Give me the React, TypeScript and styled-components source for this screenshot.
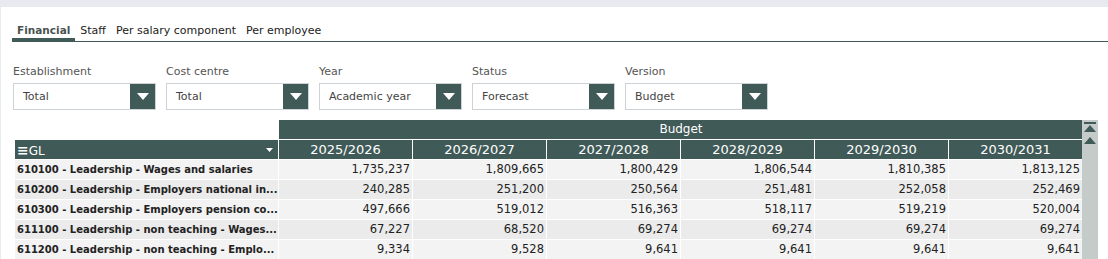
import styled, { createGlobalStyle } from 'styled-components'

const GREEN = '#405a57'

const GlobalStyle = createGlobalStyle`
  body {
    margin: 0;
    background: #e9eaef;
    font-family: 'DejaVu Sans', 'Open Sans', sans-serif;
    color: #222;
  }
`

const tabs = ['Financial', 'Staff', 'Per salary component', 'Per employee']

const filters = [
  { label: 'Establishment', value: 'Total' },
  { label: 'Cost centre', value: 'Total' },
  { label: 'Year', value: 'Academic year' },
  { label: 'Status', value: 'Forecast' },
  { label: 'Version', value: 'Budget' },
]

const years = ['2025/2026', '2026/2027', '2027/2028', '2028/2029', '2029/2030', '2030/2031']

const rows = [
  {
    name: '610100 - Leadership - Wages and salaries',
    values: ['1,735,237', '1,809,665', '1,800,429', '1,806,544', '1,810,385', '1,813,125'],
  },
  {
    name: '610200 - Leadership - Employers national in...',
    values: ['240,285', '251,200', '250,564', '251,481', '252,058', '252,469'],
  },
  {
    name: '610300 - Leadership - Employers pension co...',
    values: ['497,666', '519,012', '516,363', '518,117', '519,219', '520,004'],
  },
  {
    name: '611100 - Leadership - non teaching - Wages...',
    values: ['67,227', '68,520', '69,274', '69,274', '69,274', '69,274'],
  },
  {
    name: '611200 - Leadership - non teaching - Emplo...',
    values: ['9,334', '9,528', '9,641', '9,641', '9,641', '9,641'],
  },
]

const App = () => {
  return (
    <>
      <GlobalStyle />
      <Panel>
        <TabBar>
          {tabs.map((t, i) => (
            <Tab key={t} $active={i === 0}>
              {t}
            </Tab>
          ))}
        </TabBar>

        <Filters>
          {filters.map((f) => (
            <Filter key={f.label}>
              <FilterLabel>{f.label}</FilterLabel>
              <Select>
                <SelectValue>{f.value}</SelectValue>
                <SelectButton>
                  <svg width="12" height="7" viewBox="0 0 12 7">
                    <path d="M0 0 H12 L6 7 Z" fill="#fff" />
                  </svg>
                </SelectButton>
              </Select>
            </Filter>
          ))}
        </Filters>

        <TableWrap>
          <Grid>
            <Blank />
            <GroupHead>Budget</GroupHead>
            <GlHead>
              <span>
                <MenuIcon>≡</MenuIcon>GL
              </span>
              <svg width="7" height="4" viewBox="0 0 7 4">
                <path d="M0 0 H7 L3.5 4 Z" fill="#fff" />
              </svg>
            </GlHead>
            {years.map((y) => (
              <YearHead key={y}>{y}</YearHead>
            ))}
            {rows.map((r, i) => (
              <Row key={r.name} $odd={i % 2 === 1}>
                <NameCell>{r.name}</NameCell>
                {r.values.map((v, j) => (
                  <NumCell key={j}>{v}</NumCell>
                ))}
              </Row>
            ))}
          </Grid>
          <Scrollbar>
            <svg width="12" height="10" viewBox="0 0 12 10">
              <rect x="0" y="0" width="12" height="2" fill={GREEN} />
              <path d="M0 10 L6 3 L12 10 Z" fill={GREEN} />
            </svg>
            <svg width="12" height="8" viewBox="0 0 12 8">
              <path d="M0 7 L6 0 L12 7 Z" fill={GREEN} />
            </svg>
          </Scrollbar>
        </TableWrap>
      </Panel>
    </>
  )
}

export default App

const Panel = styled.div`
  margin: 7px 0 0 1px;
  height: 252px;
  background: #fff;
  overflow: hidden;
`

const TabBar = styled.div`
  display: flex;
  margin: 0 0 0 11px;
  padding-top: 16px;
  border-bottom: 1px solid ${GREEN};
  height: 18px;
`

const Tab = styled.div<{ $active?: boolean }>`
  padding: 0 5px;
  line-height: 15px;
  height: 15px;
  font-weight: ${(p) => (p.$active ? 'bold' : 'normal')};
  font-size: ${(p) => (p.$active ? '10.5px' : '11px')};
  color: ${(p) => (p.$active ? '#4a5452' : '#222')};
  border-bottom: 3px solid ${(p) => (p.$active ? GREEN : 'transparent')};
`

const Filters = styled.div`
  display: flex;
  gap: 10px;
  padding: 23px 0 0 12px;
`

const Filter = styled.div`
  display: flex;
  flex-direction: column;
  width: 143px;
`

const FilterLabel = styled.div`
  font-size: 11px;
  line-height: 14px;
  color: #555;
  margin-bottom: 4px;
`

const Select = styled.div`
  display: flex;
  height: 27px;
  box-sizing: border-box;
  border: 1px solid #ccd2d6;
`

const SelectValue = styled.div`
  flex: 1;
  padding-left: 9px;
  font-size: 11px;
  line-height: 25px;
  color: #444;
`

const SelectButton = styled.div`
  width: 25px;
  background: ${GREEN};
  display: flex;
  align-items: center;
  justify-content: center;
`

const TableWrap = styled.div`
  display: flex;
  margin: 10px 0 0 14px;
`

const Grid = styled.div`
  display: grid;
  grid-template-columns: 264px repeat(6, 134px);
  font-size: 11px;
`

const Blank = styled.div`
  height: 20px;
`

const GroupHead = styled.div`
  grid-column: 2 / span 6;
  height: 19px;
  border-bottom: 1px solid #fff;
  background: ${GREEN};
  color: #fff;
  text-align: center;
  line-height: 19px;
  font-size: 12px;
`

const GlHead = styled.div`
  height: 19px;
  border-bottom: 1px solid #fff;
  border-right: 1px solid #fff;
  background: ${GREEN};
  color: #fff;
  display: flex;
  align-items: center;
  justify-content: space-between;
  padding: 0 5px 0 2px;
  font-size: 12px;
`

const MenuIcon = styled.span`
  font-size: 14px;
  font-weight: bold;
`

const YearHead = styled.div`
  height: 19px;
  border-bottom: 1px solid #fff;
  border-right: 1px solid #fff;
  background: ${GREEN};
  color: #fff;
  text-align: center;
  line-height: 19px;
  font-size: 13px;
`

const Row = styled.div<{ $odd?: boolean }>`
  display: contents;
  & > div {
    background: ${(p) => (p.$odd ? '#ebebeb' : '#f3f3f3')};
  }
`

const NameCell = styled.div`
  height: 19px;
  line-height: 19px;
  border-bottom: 1px solid #fff;
  border-right: 1px solid #fff;
  font-weight: bold;
  font-size: 10px;
  padding-left: 2px;
  white-space: nowrap;
  overflow: hidden;
  text-overflow: ellipsis;
`

const NumCell = styled.div`
  height: 19px;
  line-height: 19px;
  border-bottom: 1px solid #fff;
  border-right: 1px solid #fff;
  text-align: right;
  padding-right: 2px;
  font-size: 11.5px;
`

const Scrollbar = styled.div`
  width: 16px;
  background: #c4cbc9;
  display: flex;
  flex-direction: column;
  align-items: center;
  gap: 5px;
  padding-top: 2px;
  margin-left: -1px;
`
